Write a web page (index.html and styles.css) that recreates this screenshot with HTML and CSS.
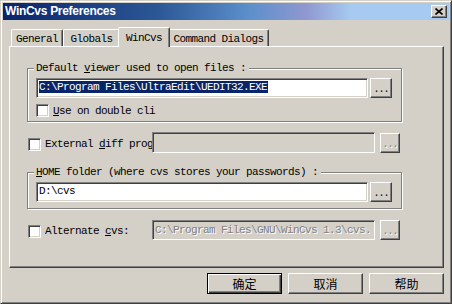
FILE: index.html
```html
<!DOCTYPE html>
<html>
<head>
<meta charset="utf-8">
<link rel="stylesheet" href="styles.css">
</head>
<body>
<div class="window">
  <div class="titlebar">
    <span class="title">WinCvs Preferences</span>
    <div class="close">
      <svg width="8" height="7" viewBox="0 0 8 7"><path d="M0.5 0.5 L7.5 6.5 M7.5 0.5 L0.5 6.5" stroke="#000" stroke-width="1.6" fill="none"/></svg>
    </div>
  </div>
  <div class="body">
    <div class="tabs">
      <div class="tab t-general">General</div>
      <div class="tab t-globals">Globals</div>
      <div class="tab t-wincvs active">WinCvs</div>
      <div class="tab t-command">Command Dialogs</div>
    </div>
    <div class="panel">
      <div class="group g1">
        <span class="legend">Default <u>v</u>iewer used to open files :</span>
        <div class="field-row">
          <div class="edit wide"><span class="sel">C:\Program Files\UltraEdit\UEDIT32.EXE</span></div>
          <div class="browse">...</div>
        </div>
        <div class="check-row">
          <span class="cb"></span><span class="cb-label"><u>U</u>se on double cli</span>
        </div>
      </div>
      <div class="opt-row r-ext">
        <span class="cb"></span>
        <span class="opt-label">External <u>d</u>iff program:</span>
        <div class="edit narrow disabled"></div>
        <div class="browse small disabled">...</div>
      </div>
      <div class="group g2">
        <span class="legend"><u>H</u>OME folder (where cvs stores your passwords) :</span>
        <div class="field-row">
          <div class="edit wide"><span>D:\cvs</span></div>
          <div class="browse">...</div>
        </div>
      </div>
      <div class="opt-row r-alt">
        <span class="cb"></span>
        <span class="opt-label">Alternate <u>c</u>vs:</span>
        <div class="edit narrow disabled"><span>C:\Program Files\GNU\WinCvs 1.3\cvs.</span></div>
        <div class="browse small disabled">...</div>
      </div>
    </div>
    <div class="buttons">
      <div class="btn default">确定</div>
      <div class="btn">取消</div>
      <div class="btn">帮助</div>
    </div>
  </div>
</div>
</body>
</html>
```
FILE: styles.css
```css
* { box-sizing: border-box; }
html, body { margin: 0; padding: 0; }
body {
  width: 452px;
  height: 304px;
  overflow: hidden;
  background: #d4d0c8;
  font-family: "Liberation Mono", "DejaVu Sans Mono", monospace;
  font-size: 11px;
  letter-spacing: -0.6px;
  color: #000;
}
u { text-decoration: underline; text-underline-offset: 1px; }

.window {
  width: 452px;
  height: 304px;
  border: 1px solid;
  border-color: #d4d0c8 #404040 #404040 #d4d0c8;
  box-shadow: inset 1px 1px #fff, inset -1px -1px #808080;
  padding: 2px;
  display: flex;
  flex-direction: column;
}

.titlebar {
  height: 17px;
  flex: none;
  display: flex;
  align-items: center;
  justify-content: space-between;
  padding: 0 2px 0 2px;
  background: linear-gradient(90deg, #0a246a 0%, #2c5896 35%, #5b8fcb 55%, #9098d0 68%, #a6caf0 78%, #a6caf0 100%);
}
.title {
  font-family: "Liberation Sans", Arial, sans-serif;
  font-weight: bold;
  font-size: 12px;
  letter-spacing: -0.3px;
  color: #fff;
  line-height: 17px;
}
.close {
  width: 16px;
  height: 13px;
  background: #d4d0c8;
  border: 1px solid;
  border-color: #fff #404040 #404040 #fff;
  box-shadow: inset -1px -1px #808080;
  display: flex;
  align-items: center;
  justify-content: center;
}
.close svg { display: block; }

.body {
  flex: 1;
  display: flex;
  flex-direction: column;
  padding: 7px 5px 0 6px;
}

.tabs {
  display: flex;
  align-items: flex-end;
  height: 19px;
  padding-left: 2px;
}
.tab {
  height: 17px;
  flex: none;
  border: 1px solid;
  border-bottom: none;
  border-color: #fff #404040 transparent #fff;
  box-shadow: inset -1px 0 #808080;
  border-radius: 2px 2px 0 0;
  display: flex;
  align-items: center;
  justify-content: center;
  padding-top: 2px;
  white-space: nowrap;
}
.t-general { width: 52px; }
.t-globals { width: 57px; }
.t-wincvs { width: 52px; }
.t-command { width: 101px; }
.tab.active {
  height: 20px;
  margin: 0 -2px -1px -2px;
  padding-top: 0;
  background: #d4d0c8;
  position: relative;
  z-index: 1;
}

.panel {
  height: 222px;
  border: 1px solid;
  border-color: #fff #404040 #404040 #fff;
  box-shadow: inset -1px -1px #808080;
  padding: 21px 0 0 17px;
  display: flex;
  flex-direction: column;
  align-items: flex-start;
}

.group {
  width: 375px;
  border: 1px solid #808080;
  box-shadow: inset 1px 1px #fff, 1px 1px #fff;
  padding: 0 0 4px 8px;
  display: flex;
  flex-direction: column;
}
.legend {
  display: block;
  align-self: flex-start;
  height: 12px;
  line-height: 12px;
  margin: -7px 0 0 -2px;
  padding: 0 3px 0 2px;
  background: #d4d0c8;
  white-space: nowrap;
}
.field-row {
  display: flex;
  margin-top: 4px;
}
.g2 { margin-top: 19px; padding-bottom: 6px; }

.edit {
  flex: none;
  height: 20px;
  background: #fff;
  border: 1px solid;
  border-color: #808080 #fff #fff #808080;
  box-shadow: inset 1px 1px #404040, inset -1px -1px #d4d0c8;
  padding: 2px 2px 0 2px;
  line-height: 13px;
  white-space: nowrap;
  overflow: hidden;
}
.edit.wide { width: 332px; }
.edit.narrow { width: 223px; height: 21px; padding-top: 3px; }
.edit.disabled { background: #d4d0c8; color: #808080; text-shadow: 1px 1px #fff; }
.sel { background: #0a246a; color: #fff; padding-right: 1px; }

.browse {
  flex: none;
  width: 22px;
  height: 20px;
  margin-left: 2px;
  border: 1px solid;
  border-color: #fff #404040 #404040 #fff;
  box-shadow: inset -1px -1px #808080;
  display: flex;
  align-items: center;
  justify-content: center;
  padding-top: 2px;
  letter-spacing: -1px;
  font-size: 10px;
}
.browse.small { width: 20px; margin-left: 5px; align-self: flex-end; }
.browse.disabled { color: #808080; text-shadow: 1px 1px #fff; }

.check-row {
  display: flex;
  align-items: center;
  margin-top: 6px;
  height: 13px;
}
.cb {
  width: 13px;
  height: 13px;
  flex: none;
  background: #fff;
  border: 1px solid;
  border-color: #808080 #fff #fff #808080;
  box-shadow: inset 1px 1px #404040, inset -1px -1px #d4d0c8;
}
.cb-label { margin-left: 4px; }

.opt-row {
  display: flex;
  align-items: center;
  height: 21px;
  margin-left: 1px;
  flex: none;
}
.opt-row .cb { margin-top: 3px; }
.opt-label {
  flex: none;
  width: 107px;
  margin-left: 4px;
  padding-top: 2px;
  white-space: nowrap;
  overflow: hidden;
}
.r-ext { margin-top: 10px; }
.r-alt { margin-top: 10px; }
.r-alt .edit { height: 20px; }

.buttons {
  display: flex;
  justify-content: flex-end;
  gap: 6px;
  margin-top: 5px;
}
.btn {
  width: 75px;
  height: 21px;
  border: 1px solid;
  border-color: #fff #404040 #404040 #fff;
  box-shadow: inset -1px -1px #808080;
  display: flex;
  align-items: center;
  justify-content: center;
  font-family: "Noto Sans CJK SC", sans-serif;
  font-size: 12px;
  letter-spacing: 0;
}
.btn.default {
  border-color: #000;
  box-shadow: inset 1px 1px #fff, inset -1px -1px #404040, inset -2px -2px #808080;
}
```
